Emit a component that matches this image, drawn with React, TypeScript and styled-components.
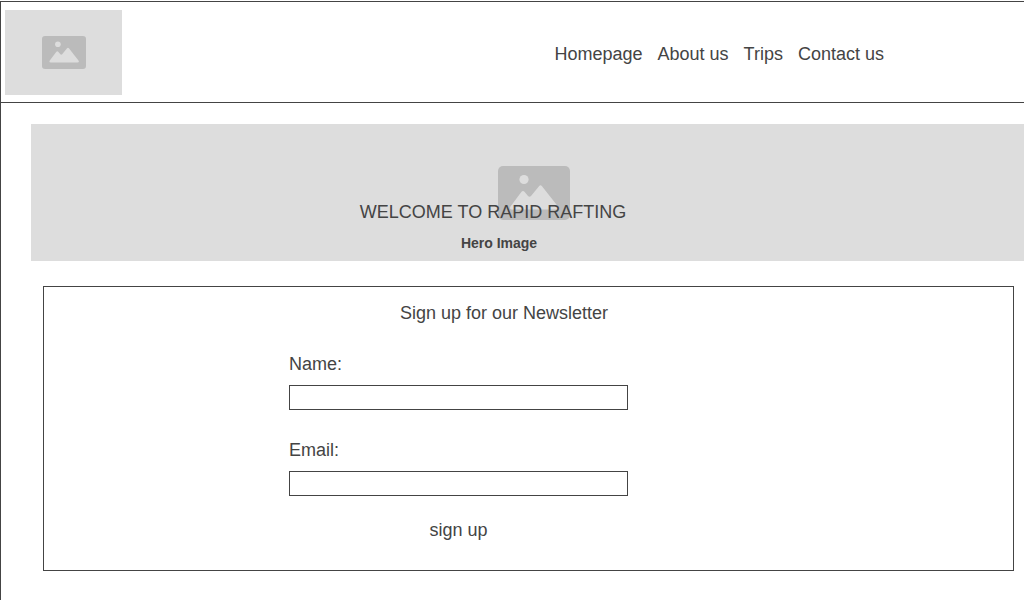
import React from "react";
import styled, { createGlobalStyle } from "styled-components";

const ink = "#444444";
const fill = "#dddddd";
const iconFill = "#bbbbbb";

const GlobalStyle = createGlobalStyle`
  *, *::before, *::after { box-sizing: border-box; }
  body {
    margin: 0;
    padding-top: 1px;
    overflow-x: hidden;
    background: #ffffff;
    color: ${ink};
    font: 18px/20px "Liberation Sans", Arial, sans-serif;
  }
`;

const Page = styled.div`
  min-height: calc(100vh - 1px);
  border-left: 1px solid ${ink};
  overflow-x: hidden;
`;

const Header = styled.header`
  display: flex;
  align-items: center;
  justify-content: space-between;
  padding: 8px 140px 7px 4px;
  border: solid ${ink};
  border-width: 1px 0;
`;

const Placeholder = styled.div`
  display: flex;
  align-items: center;
  justify-content: center;
  background: ${fill};
`;

const Logo = styled(Placeholder)`
  width: 117px;
  height: 85px;
`;

const Nav = styled.nav`
  display: flex;
  gap: 15px;
  padding-top: 2px;
`;

const NavLink = styled.a`
  color: inherit;
  text-decoration: none;
  white-space: nowrap;
`;

const Hero = styled(Placeholder)`
  position: relative;
  height: 137px;
  margin: 21px -12px 0 30px;
`;

const HeroTitle = styled.h1`
  position: absolute;
  top: 78px;
  left: 0;
  right: 81px;
  margin: 0;
  font-size: 18px;
  font-weight: 400;
  text-align: center;
`;

const HeroCaption = styled.p`
  position: absolute;
  top: 109px;
  left: 0;
  right: 69px;
  margin: 0;
  font-size: 14px;
  font-weight: 700;
  text-align: center;
`;

const Newsletter = styled.section`
  margin: 25px 10px 29px 42px;
  padding: 16px 0 30px;
  border: 1px solid ${ink};
`;

const SectionTitle = styled.h2`
  margin: 0;
  padding-right: 49px;
  font-size: 18px;
  font-weight: 400;
  text-align: center;
`;

const Form = styled.form`
  display: flex;
  flex-direction: column;
  width: 35%;
  margin: 31px 0 0 245px;
`;

const Field = styled.div`
  display: flex;
  flex-direction: column;
  gap: 11px;

  & + & {
    margin-top: 30px;
  }
`;

const Input = styled.input`
  width: 100%;
  height: 25px;
  padding: 0 6px;
  border: 1px solid ${ink};
  border-radius: 0;
  background: #ffffff;
  color: inherit;
  font: inherit;
`;

const SubmitButton = styled.button`
  align-self: center;
  margin-top: 24px;
  padding: 0;
  border: 0;
  background: none;
  color: inherit;
  font: inherit;
  cursor: pointer;
`;

function PictureIcon({ width }: { width: number }) {
  return (
    <svg width={width} height={width * 0.75} viewBox="0 0 72 54" aria-hidden="true">
      <rect width="72" height="54" rx="5" fill={iconFill} />
      <circle cx="26" cy="13.5" r="4.6" fill={fill} />
      <path
        d="M12.5 40.5 L23.5 25.8 Q25 24 26.5 25.8 L30 30 Q31.5 31.5 33 30 L41 20.2 Q42.5 18.4 44 20.2 L60 40.5 Q61.5 43.5 58.5 43.5 H14 Q11 43.5 12.5 40.5 Z"
        fill={fill}
      />
    </svg>
  );
}

const links = ["Homepage", "About us", "Trips", "Contact us"];

export default function App() {
  return (
    <>
      <GlobalStyle />
      <Page>
        <Header>
          <Logo>
            <PictureIcon width={44} />
          </Logo>
          <Nav>
            {links.map((link) => (
              <NavLink key={link} href="#">
                {link}
              </NavLink>
            ))}
          </Nav>
        </Header>
        <main>
          <Hero>
            <PictureIcon width={72} />
            <HeroTitle>WELCOME TO RAPID RAFTING</HeroTitle>
            <HeroCaption>Hero Image</HeroCaption>
          </Hero>
          <Newsletter>
            <SectionTitle>Sign up for our Newsletter</SectionTitle>
            <Form onSubmit={(event) => event.preventDefault()}>
              <Field>
                <label htmlFor="name">Name:</label>
                <Input id="name" type="text" />
              </Field>
              <Field>
                <label htmlFor="email">Email:</label>
                <Input id="email" type="email" />
              </Field>
              <SubmitButton type="submit">sign up</SubmitButton>
            </Form>
          </Newsletter>
        </main>
      </Page>
    </>
  );
}
